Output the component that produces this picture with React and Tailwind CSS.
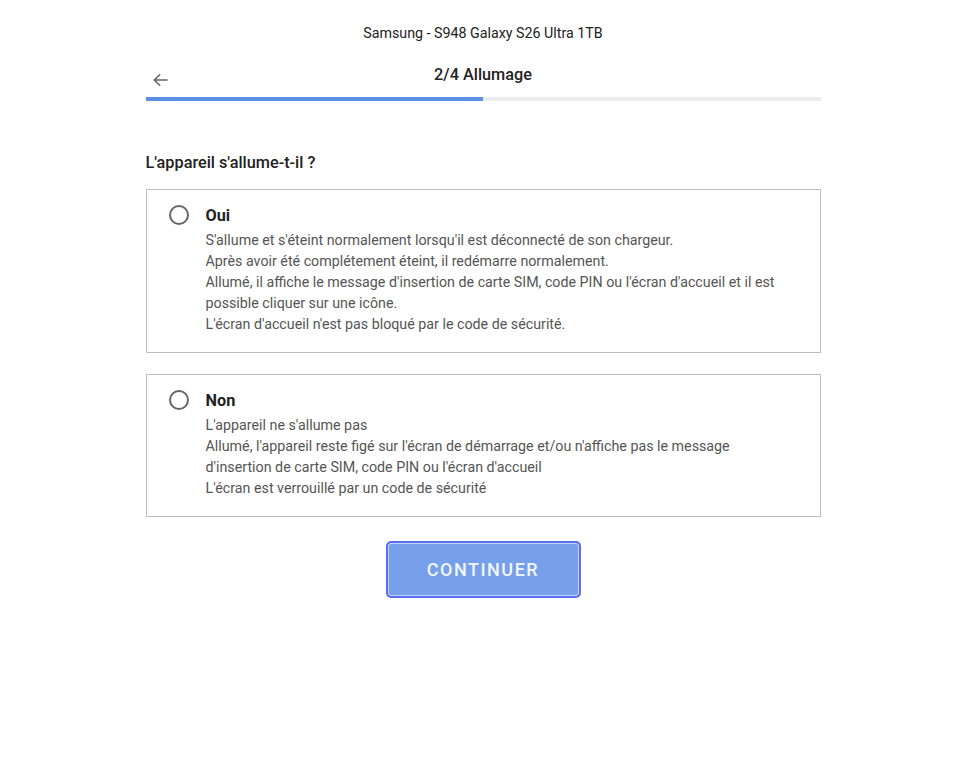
import { useState } from "react";

const OPTIONS = [
  {
    id: "oui",
    label: "Oui",
    lines: [
      "S'allume et s'éteint normalement lorsqu'il est déconnecté de son chargeur.",
      "Après avoir été complétement éteint, il redémarre normalement.",
      "Allumé, il affiche le message d'insertion de carte SIM, code PIN ou l'écran d'accueil et il est possible cliquer sur une icône.",
      "L'écran d'accueil n'est pas bloqué par le code de sécurité.",
    ],
  },
  {
    id: "non",
    label: "Non",
    lines: [
      "L'appareil ne s'allume pas",
      "Allumé, l'appareil reste figé sur l'écran de démarrage et/ou n'affiche pas le message d'insertion de carte SIM, code PIN ou l'écran d'accueil",
      "L'écran est verrouillé par un code de sécurité",
    ],
  },
];

export default function App() {
  const [choice, setChoice] = useState(null);

  return (
    <div className="min-h-screen bg-white font-['Roboto',sans-serif] text-[#222]">
      <div className="mx-auto w-[675px] pt-[24px]">
        <div className="text-center text-[14.25px] leading-[18px] text-[#222]">
          Samsung - S948 Galaxy S26 Ultra 1TB
        </div>

        {/* étape */}
        <div className="mt-[21px] grid grid-cols-[40px_1fr_40px] items-center">
          <button className="flex h-[24px] w-[30px] items-center justify-center pt-[10px]" aria-label="retour">
            <svg className="h-[20px] w-[20px] text-[#666]" viewBox="0 0 24 24" fill="none" stroke="currentColor" strokeWidth="1.8">
              <path d="M20 12H4M11 5l-7 7 7 7" />
            </svg>
          </button>
          <div className="text-center text-[16.25px] font-medium leading-[20px]">2/4 Allumage</div>
          <div />
        </div>
        <div className="mt-[10px] flex h-[4px] bg-[#ebebeb]">
          <div className="w-1/2 bg-[#5b8fe6]" />
        </div>

        <div className="mt-[52px] text-[16.25px] font-medium leading-[20px]">L'appareil s'allume-t-il ?</div>

        <div className="mt-[16px] flex flex-col gap-[21px]">
          {OPTIONS.map((o) => (
            <label
              key={o.id}
              className="flex cursor-pointer gap-[17px] border border-[#bdbdbd] pb-[17px] pl-[22px] pr-[30px] pt-[15px]"
              onClick={() => setChoice(o.id)}
            >
              <span className="flex h-[20px] w-[20px] shrink-0 items-center justify-center rounded-full border-2 border-[#666]">
                {choice === o.id && <span className="h-[10px] w-[10px] rounded-full bg-[#5b8fe6]" />}
              </span>
              <div className="max-w-[580px]">
                <div className="text-[16.25px] font-bold leading-[22px] text-[#222]">{o.label}</div>
                <div className="mt-[3px] text-[14.25px] leading-[21px] text-[#555]">
                  {o.lines.map((l) => (
                    <div key={l}>{l}</div>
                  ))}
                </div>
              </div>
            </label>
          ))}
        </div>

        <div className="mt-[24px] flex justify-center">
          <button className="h-[57px] w-[195px] rounded-[5px] border-2 border-[#5a6ef5] bg-[#76a0e9] text-[18px] font-medium tracking-[1.5px] text-[#f2f6ff] shadow-[inset_0_0_0_1px_#c6d5f7]">
            CONTINUER
          </button>
        </div>
      </div>
    </div>
  );
}
